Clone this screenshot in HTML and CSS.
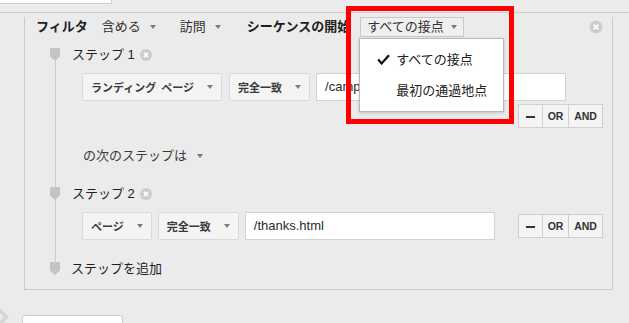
FILE: index.html
```html
<!DOCTYPE html>
<html lang="ja">
<head>
<meta charset="utf-8">
<title>フィルタ</title>
<link rel="stylesheet" href="styles.css">
</head>
<body>
<div class="stub"></div>
<div class="rule"></div>
<div class="panel">
  <div class="filter-row">
    <span class="lbl-strong">フィルタ</span>
    <span class="dd dd-include">含める<i class="caret"></i></span>
    <span class="dd dd-visit">訪問<i class="caret"></i></span>
    <span class="lbl-strong seq">シーケンスの開始</span>
    <span class="picker">
      <span class="picker-btn">すべての接点<i class="caret"></i></span>
      <div class="menu">
        <div class="menu-item checked"><svg class="check" viewBox="0 0 13 11" width="13" height="11"><path d="M1.2 5.6 L4.6 9.4 L12 1.2" fill="none" stroke="#111" stroke-width="2.3"/></svg>すべての接点</div>
        <div class="menu-item">最初の通過地点</div>
      </div>
    </span>
    <svg class="x-icon x-panel" viewBox="0 0 14 14" width="14" height="14"><circle cx="7" cy="7" r="6.5" fill="#cdcdcd"/><path d="M4.6 4.6 L9.4 9.4 M9.4 4.6 L4.6 9.4" stroke="#fff" stroke-width="1.6"/></svg>
  </div>

  <div class="steps">
    <div class="step-head">
      <svg class="marker" viewBox="0 0 10 13" width="10" height="13"><path d="M0 0H10V8.5L5 13L0 8.5Z" fill="#c4c4c4"/></svg>
      <span class="step-lbl">ステップ 1</span>
      <svg class="x-icon x-step" viewBox="0 0 12 12" width="12" height="12"><circle cx="6" cy="6" r="6" fill="#cdcdcd"/><path d="M3.9 3.9 L8.1 8.1 M8.1 3.9 L3.9 8.1" stroke="#fff" stroke-width="1.5"/></svg>
    </div>
    <div class="cond-row r1">
      <span class="sel sel-wide">ランディング ページ<i class="caret"></i></span>
      <span class="sel">完全一致<i class="caret"></i></span>
      <div class="textbox">/campaign</div>
      <div class="ops"><span class="op op-minus"><span class="dash"></span></span><span class="op op-or">OR</span><span class="op op-and">AND</span></div>
    </div>
    <div class="next">の次のステップは<i class="caret"></i></div>
    <div class="step-head s2">
      <svg class="marker" viewBox="0 0 10 13" width="10" height="13"><path d="M0 0H10V8.5L5 13L0 8.5Z" fill="#c4c4c4"/></svg>
      <span class="step-lbl">ステップ 2</span>
      <svg class="x-icon x-step" viewBox="0 0 12 12" width="12" height="12"><circle cx="6" cy="6" r="6" fill="#cdcdcd"/><path d="M3.9 3.9 L8.1 8.1 M8.1 3.9 L3.9 8.1" stroke="#fff" stroke-width="1.5"/></svg>
    </div>
    <div class="cond-row r2">
      <span class="sel">ページ<i class="caret"></i></span>
      <span class="sel">完全一致<i class="caret"></i></span>
      <div class="textbox">/thanks.html</div>
      <div class="ops"><span class="op op-minus"><span class="dash"></span></span><span class="op op-or">OR</span><span class="op op-and">AND</span></div>
    </div>
    <div class="step-head add">
      <svg class="marker" viewBox="0 0 10 13" width="10" height="13"><path d="M0 0H10V8.5L5 13L0 8.5Z" fill="#c4c4c4"/></svg>
      <span class="step-lbl">ステップを追加</span>
    </div>
  </div>
</div>
<div class="foot">
  <svg class="chev" viewBox="0 0 9 18" width="9" height="18"><path d="M0 0 L9 9 L0 18 L0 13 L4 9 L0 5Z" fill="#d6d6d6"/></svg>
  <div class="tab"></div>
</div>
<div class="highlight"></div>
</body>
</html>
```

FILE: styles.css
```css
html, body {
  margin: 0;
  padding: 0;
}
body {
  background: #ebebeb;
  font-family: "Liberation Sans", "Noto Sans CJK JP", sans-serif;
  font-size: 13px;
  color: #222;
  width: 629px;
  height: 323px;
  overflow: hidden;
  position: relative;
}
.stub {
  width: 111px;
  height: 3px;
  background: #fff;
  border-right: 1px solid #cfcfcf;
  border-bottom: 1px solid #cfcfcf;
}
.rule {
  margin-top: 8px;
  height: 1px;
  background: #cfcfcf;
}
.panel {
  margin: 0 16px 0 24px;
  border: 1px solid #cbcbcb;
  border-top: none;
  padding: 0 0 14px 0;
}

/* filter row */
.filter-row {
  display: flex;
  align-items: center;
  height: 20px;
  margin-top: 4px;
  padding-left: 11px;
  line-height: 20px;
  white-space: nowrap;
}
.lbl-strong {
  font-weight: bold;
  color: #1e1e1e;
}
.dd {
  display: inline-flex;
  align-items: center;
  color: #333;
}
.dd-include { margin-left: 14px; }
.dd-visit { margin-left: 24px; }
.dd .caret { margin-left: 9px; }
.seq { margin-left: 26px; }
.caret {
  display: inline-block;
  width: 0;
  height: 0;
  border-left: 3px solid transparent;
  border-right: 3px solid transparent;
  border-top: 4px solid #7a7a7a;
}
.picker {
  position: relative;
  margin-left: 10px;
  z-index: 5;
}
.picker-btn {
  display: inline-flex;
  align-items: center;
  box-sizing: border-box;
  height: 20px;
  padding: 0 6px 0 6px;
  background: #efefef;
  border: 1px solid #c9c9c9;
  color: #333;
}
.picker-btn .caret { margin-left: 7px; }
.menu {
  position: absolute;
  left: -1px;
  top: 21px;
  width: 143px;
  padding: 5px 0;
  background: #fff;
  border: 1px solid #b9b9b9;
  box-shadow: 0 1px 3px rgba(0,0,0,0.18);
}
.menu-item {
  display: flex;
  align-items: center;
  height: 31px;
  padding-left: 36px;
  color: #222;
}
.menu-item.checked { padding-left: 17px; }
.check { margin-right: 6px; }
.x-panel {
  margin-left: auto;
  margin-right: 9px;
}

/* steps */
.steps {
  margin-top: 11px;
  background: linear-gradient(#cacaca, #cacaca) 30px 13px / 1px 201px no-repeat;
}
.step-head {
  display: flex;
  align-items: center;
  height: 13px;
  margin-left: 25px;
  line-height: 13px;
}
.marker { flex: none; }
.step-lbl {
  margin-left: 12px;
  color: #1e1e1e;
}
.x-step { margin-left: 5px; }
.step-head.s2 { margin-top: 23px; }
.step-head.add { margin-top: 22px; }
.step-head.add .step-lbl { margin-left: 11px; }

.cond-row {
  display: flex;
  flex-wrap: wrap;
  align-items: center;
  gap: 3px 6px;
  margin: 12px 9px 0 57px;
}
.sel {
  display: inline-flex;
  align-items: center;
  box-sizing: border-box;
  height: 28px;
  padding: 0 8px 0 8px;
  background: #f4f4f4;
  border: 1px solid #dadada;
  border-radius: 2px;
  font-size: 11px;
  font-weight: bold;
  color: #3a3a3a;
  white-space: nowrap;
}
.sel .caret { margin-left: 13px; }
.sel-wide { word-spacing: 2px; }
.r1 .sel + .sel { margin-left: 1px; }
.textbox {
  box-sizing: border-box;
  width: 250px;
  height: 28px;
  padding-left: 8px;
  background: #fff;
  border: 1px solid #d2d2d2;
  line-height: 26px;
  font-size: 13px;
  color: #2a2a2a;
  white-space: nowrap;
  overflow: hidden;
}
.ops {
  display: flex;
  margin-left: auto;
  height: 24px;
}
.op {
  display: flex;
  align-items: center;
  justify-content: center;
  box-sizing: border-box;
  height: 24px;
  background: #f4f4f4;
  border: 1px solid #cfcfcf;
  border-left: none;
  font-size: 10.5px;
  font-weight: bold;
  color: #333;
}
.op-minus { width: 25px; border-left: 1px solid #cfcfcf; }
.op-or { width: 26px; }
.op-and { width: 34px; }
.dash {
  display: block;
  width: 9px;
  height: 2px;
  margin-top: 2px;
  background: #333;
}

.next {
  display: flex;
  align-items: center;
  height: 16px;
  line-height: 16px;
  margin: 20px 0 0 58px;
  color: #3a3a3a;
}
.next .caret { margin-left: 10px; }

/* footer */
.foot {
  display: flex;
  align-items: flex-start;
}
.chev {
  margin-top: 18px;
  flex: none;
}
.tab {
  margin: 25px 0 0 13px;
  width: 101px;
  height: 20px;
  box-sizing: border-box;
  background: #fff;
  border: 1px solid #cbcbcb;
  border-radius: 3px 3px 0 0;
}

.highlight {
  position: absolute;
  left: 346px;
  top: 6px;
  width: 168px;
  height: 118px;
  box-sizing: border-box;
  border: 5px solid #ff0000;
  z-index: 10;
}
```
